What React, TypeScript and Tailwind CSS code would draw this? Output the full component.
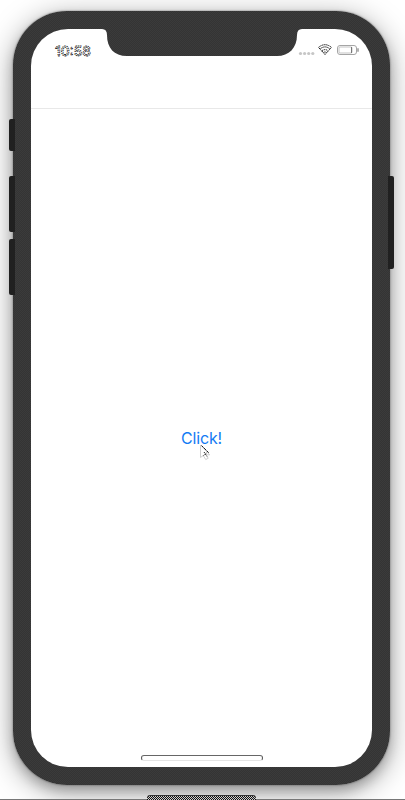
import React from "react";

function Time() {
  return (
    <svg width="40" height="18" viewBox="0 0 40 18" className="opacity-99">
      <text
        x="1"
        y="12.5"
        textLength="36"
        lengthAdjust="spacingAndGlyphs"
        className="fill-white stroke-black font-['Inter','Liberation_Sans',sans-serif] text-[13.5px] font-medium"
        strokeWidth="0.8"
        strokeDasharray="1.4 0.8"
      >
        10:58
      </text>
    </svg>
  );
}

function StatusIcons() {
  return (
    <svg width="62" height="14" viewBox="0 0 62 14" fill="none">
      <g fill="#c6c6c6">
        <circle cx="2.5" cy="10.5" r="1.6" />
        <circle cx="6.6" cy="10.5" r="1.6" />
        <circle cx="10.7" cy="10.5" r="1.6" />
        <circle cx="14.8" cy="10.5" r="1.6" />
      </g>
      <g stroke="#111" strokeWidth="1" strokeDasharray="1.4 0.7">
        <path d="M20.5 4.4Q27-1 33.5 4.4L27 11.5Z" />
        <path d="M22.5 5.6Q27 2.2 31.5 5.6M23.8 7.8Q27 5.5 30.2 7.8M25.5 9.6l1.5-.8 1.5.8" />
      </g>
      <rect x="39.5" y="2.5" width="19" height="9" rx="2.5" stroke="#a5a5a5" />
      <rect x="41" y="4" width="13" height="6" rx="1" stroke="#aaa" strokeWidth=".7" />
      <path d="M53.5 4v6" stroke="#777" />
      <path d="M60 5.3v3.5" stroke="#999" strokeWidth="1.5" />
    </svg>
  );
}

function Pointer() {
  return (
    <svg className="absolute left-[17px] top-[16px]" width="14" height="18" viewBox="0 0 14 18">
      <path d="M2.5 1v12.5l2.7-2 2.5 4 2.5-1.2-2-3.5h3.5Z" fill="white" stroke="#cfcfcf" />
      <path d="M3.5 1.5l7.5 7.5" stroke="#222" strokeDasharray="3 0.6" />
      <path d="M6 8l3 4.5M8.5 9l-3 2.5" stroke="#222" strokeDasharray="1.5 1" />
    </svg>
  );
}

function SideButton({ className }: { className: string }) {
  return <div className={`w-[6px] shrink-0 bg-[#202020] ${className}`} />;
}

export default function App() {
  return (
    <main className="flex h-[800px] w-[405px] flex-col overflow-hidden bg-white pt-[11px] font-['Inter','Liberation_Sans',sans-serif]">
      <div className="flex h-[774px] shrink-0">
        <div className="z-10 flex w-[13px] shrink-0 flex-col pl-[9px] pt-[108px]">
          <SideButton className="mb-[25px] h-[32px] rounded-l-[2px]" />
          <SideButton className="mb-[7px] h-[56px] rounded-l-[2px]" />
          <SideButton className="h-[56px] rounded-l-[2px]" />
        </div>
        <div className="relative w-[377px] shrink-0 rounded-[54px] bg-[repeating-conic-gradient(#343434_0_25%,#3b3b3b_0_50%)] bg-[length:2px_2px] p-[18px] shadow-[0_6px_30px_rgba(0,0,0,.36),0_6px_12px_rgba(0,0,0,.2),0_0_2px_rgba(0,0,0,.5)]">
          <div className="flex h-full flex-col rounded-[37px] bg-white">
            <header className="flex h-[80px] shrink-0 items-start justify-between border-b border-[#e8e8e8] pl-[23px] pr-[12px] pt-[14px]">
              <Time />
              <StatusIcons />
            </header>
            <section className="flex flex-1 items-center justify-center pt-[12px]">
              <button className="relative text-[16px] leading-[20px] tracking-[-0.15px] text-[#147bf4]">
                Click!
                <Pointer />
              </button>
            </section>
            <div className="mb-[6px] h-[6px] w-[122px] shrink-0 self-center rounded-full border border-x-[#555] border-b-[#e4e4e4] border-t-[#666]" />
          </div>
          <svg className="absolute left-[89px] top-[17px]" width="200" height="29" viewBox="0 0 200 29">
            <defs>
              <pattern id="grain" width="2" height="2" patternUnits="userSpaceOnUse">
                <rect width="2" height="2" fill="#343434" />
                <path d="M0 0h1v1H0zM1 1h1v1H1z" fill="#3b3b3b" />
              </pattern>
            </defs>
            <path d="M0 0H200V1Q195 1 195 7C195 20 187 28 175 28H25C12 28 5 20 5 7Q5 1 0 1Z" fill="url(#grain)" />
          </svg>
        </div>
        <div className="z-10 -ml-[2px] pt-[165px]">
          <SideButton className="h-[93px] rounded-r-[2px]" />
        </div>
      </div>
      <footer className="z-10 flex flex-1 items-end">
        <div className="h-px w-[147px] bg-[#777]" />
        <div className="h-[5px] w-[109px] rounded-t-[3px] border-t border-[#333] bg-[repeating-conic-gradient(#111_0_25%,#ccc_0_50%)] bg-[length:2px_2px]" />
        <div className="h-px flex-1 bg-[#777]" />
      </footer>
    </main>
  );
}
